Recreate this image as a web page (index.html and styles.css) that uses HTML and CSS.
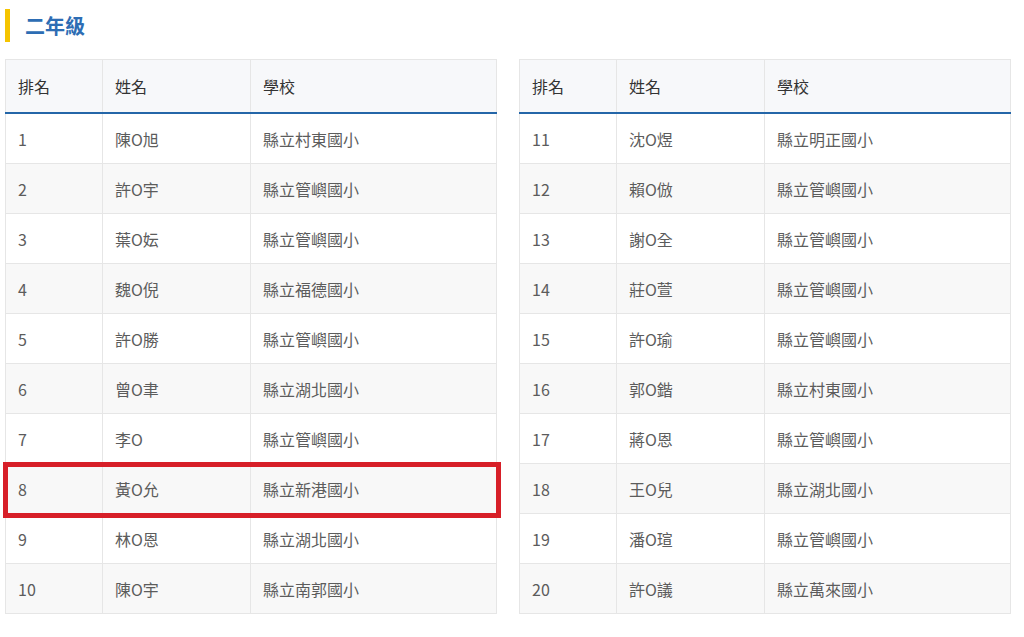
FILE: index.html
```html
<!DOCTYPE html>
<html lang="zh-Hant">
<head>
<meta charset="utf-8">
<title>二年級</title>
<link rel="stylesheet" href="styles.css">
</head>
<body>
<div class="page">
  <h2 class="grade-title">二年級</h2>
  <div class="tables">
    <div class="table-wrap">
      <table class="rank">
        <colgroup><col class="c1"><col class="c2"><col class="c3"></colgroup>
        <thead><tr><th>排名</th><th>姓名</th><th>學校</th></tr></thead>
        <tbody>
          <tr><td>1</td><td>陳O旭</td><td>縣立村東國小</td></tr>
          <tr><td>2</td><td>許O宇</td><td>縣立管嶼國小</td></tr>
          <tr><td>3</td><td>葉O妘</td><td>縣立管嶼國小</td></tr>
          <tr><td>4</td><td>魏O倪</td><td>縣立福德國小</td></tr>
          <tr><td>5</td><td>許O勝</td><td>縣立管嶼國小</td></tr>
          <tr><td>6</td><td>曾O聿</td><td>縣立湖北國小</td></tr>
          <tr><td>7</td><td>李O</td><td>縣立管嶼國小</td></tr>
          <tr><td>8</td><td>黃O允</td><td>縣立新港國小</td></tr>
          <tr><td>9</td><td>林O恩</td><td>縣立湖北國小</td></tr>
          <tr><td>10</td><td>陳O宇</td><td>縣立南郭國小</td></tr>
        </tbody>
      </table>
      <div class="highlight"></div>
    </div>
    <div class="table-wrap">
      <table class="rank">
        <colgroup><col class="c1"><col class="c2"><col class="c3"></colgroup>
        <thead><tr><th>排名</th><th>姓名</th><th>學校</th></tr></thead>
        <tbody>
          <tr><td>11</td><td>沈O煜</td><td>縣立明正國小</td></tr>
          <tr><td>12</td><td>賴O倣</td><td>縣立管嶼國小</td></tr>
          <tr><td>13</td><td>謝O全</td><td>縣立管嶼國小</td></tr>
          <tr><td>14</td><td>莊O萱</td><td>縣立管嶼國小</td></tr>
          <tr><td>15</td><td>許O瑜</td><td>縣立管嶼國小</td></tr>
          <tr><td>16</td><td>郭O鍇</td><td>縣立村東國小</td></tr>
          <tr><td>17</td><td>蔣O恩</td><td>縣立管嶼國小</td></tr>
          <tr><td>18</td><td>王O兒</td><td>縣立湖北國小</td></tr>
          <tr><td>19</td><td>潘O瑄</td><td>縣立管嶼國小</td></tr>
          <tr><td>20</td><td>許O議</td><td>縣立萬來國小</td></tr>
        </tbody>
      </table>
    </div>
  </div>
</div>
</body>
</html>
```

FILE: styles.css
```css
html, body {
  margin: 0;
  padding: 0;
  background: #ffffff;
}

.page {
  padding: 9px 13px 0 5px;
  font-family: "Noto Sans CJK TC", "Noto Sans", "Liberation Sans", sans-serif;
}

.grade-title {
  margin: 0;
  height: 33px;
  border-left: 5px solid #f5c400;
  padding-left: 15px;
  font-size: 20px;
  line-height: 33px;
  font-weight: 700;
  color: #2d6db4;
}

.tables {
  display: flex;
  gap: 22px;
  margin-top: 17px;
}

.table-wrap {
  position: relative;
  flex: 1 1 0;
}

.rank {
  width: 100%;
  border-collapse: collapse;
  table-layout: fixed;
  border: 1px solid #e6e6e6;
  font-size: 16px;
}

.c1 { width: 97px; }
.c2 { width: 148px; }

.rank th,
.rank td {
  text-align: left;
  padding: 0 0 0 12px;
  border: 1px solid #e6e6e6;
  white-space: nowrap;
}

.rank thead th {
  height: 52px;
  background: #f7f8fa;
  color: #333333;
  font-weight: 400;
  border-bottom: 2px solid #2466a8;
}

.rank tbody td {
  height: 49px;
  color: #5c5c5c;
}

.rank tbody tr:nth-child(even) td {
  background: #f8f8f8;
}

.highlight {
  position: absolute;
  left: -2px;
  top: 403px;
  width: 488px;
  height: 46px;
  border: 5px solid #d71f28;
  pointer-events: none;
}
```
